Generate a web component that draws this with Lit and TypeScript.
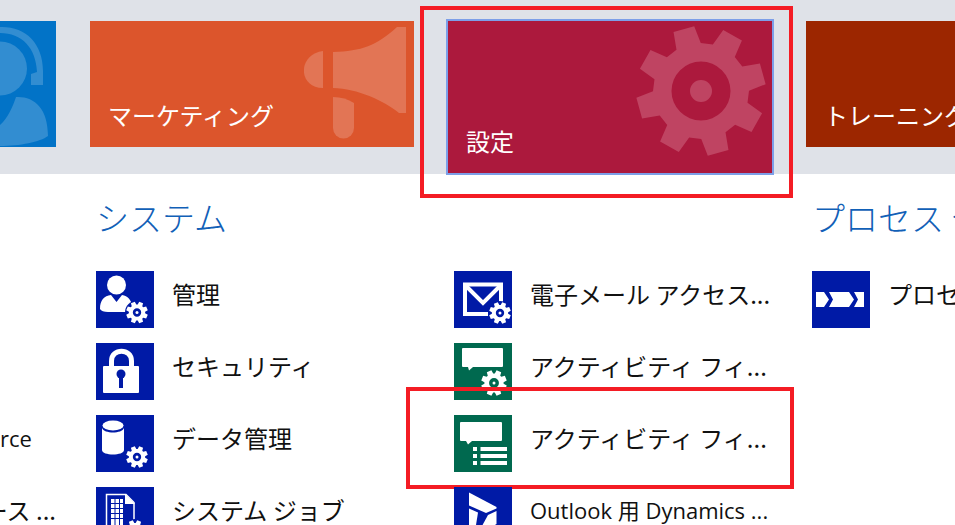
import { LitElement, html, svg, css } from "lit";
import { customElement } from "lit/decorators.js";
import { classMap } from "lit/directives/class-map.js";

/* Outline of a cog wheel with a round hole, to be filled with the even-odd rule. */
function cog(cx: number, cy: number, tip: number, root: number, hole: number, start = 0, half = 10, teeth = 8): string {
  const pt = (r: number, deg: number) => {
    const a = (deg * Math.PI) / 180;
    return `${(cx + r * Math.cos(a)).toFixed(2)} ${(cy + r * Math.sin(a)).toFixed(2)}`;
  };
  let d = "";
  for (let i = 0; i < teeth; i++) {
    const a = start + (i * 360) / teeth;
    d += `${i ? "L" : "M"}${pt(root, a - half * 1.6)}L${pt(tip, a - half)}L${pt(tip, a + half)}L${pt(root, a + half * 1.6)}`;
  }
  return `${d}ZM${cx - hole} ${cy}a${hole} ${hole} 0 1 0 ${hole * 2} 0a${hole} ${hole} 0 1 0 ${-hole * 2} 0Z`;
}

const smallCog = (cx: number, cy: number, r = 11) => svg`
  <circle class="back" cx=${cx} cy=${cy} r=${r + 1}></circle>
  <path fill-rule="evenodd" d=${cog(cx, cy, r, r * 0.74, r * 0.38, 22.5, 11)}></path>
  <circle cx=${cx} cy=${cy} r="1.5"></circle>`;

const glyphs: Record<string, unknown> = {
  admin: svg`
    <circle cx="20.500" cy="14" r="9.500"></circle>
    <path d="M4 38C4 29 8 25 15 24L20.500 31L26 24C32 25 35 29 36 34L32 41H12C8 41 5 40 4 38Z"></path>
    ${smallCog(41, 41.5)}`,
  lock: svg`
    <path class="line" stroke-width="5" d="M15.500 25V18C15.500 5 35.500 5 35.500 18V25"></path>
    <rect x="7" y="23" width="36" height="27" rx="1"></rect>
    <circle class="back" cx="25" cy="31" r="4.500"></circle>
    <path class="back" d="M23 32H27V45H23Z"></path>`,
  data: svg`
    <path d="M6 13C8 19 26 19 28 13V35C28 41 6 41 6 35Z"></path>
    <ellipse cx="17" cy="10.500" rx="10.500" ry="5"></ellipse>
    ${smallCog(41, 42)}`,
  jobs: svg`
    <path class="line" stroke-width="1.500" d="M10.500 57V7.500H30L38 15.500V57"></path>
    <path d="M29 7L39 17H29Z"></path>
    <path d="M15 12H27V50H15Z"></path>
    <path class="cut" d="M14 16.500H28M14 21.500H28M14 26.500H28M14 31.500H28M19 11V50M23.500 11V50"></path>
    ${smallCog(39, 44)}`,
  mail: svg`
    <path class="line" stroke-width="4" d="M34 43H11V13.500H47V32"></path>
    <path class="line" stroke-width="4" d="M11 14L29 32L47 14"></path>
    ${smallCog(46, 42)}`,
  feedCog: svg`
    <path d="M9 5H48Q49 5 49 6V23Q49 24 48 24H19L15 27.500L14 24H9Q8 24 8 23V6Q8 5 9 5Z"></path>
    ${smallCog(40, 40, 13)}`,
  feedList: svg`
    <path d="M7 7H47Q48 7 48 8V25Q48 26 47 26H18L14 29.500L12 26H7Q6 26 6 25V8Q6 7 7 7Z"></path>
    <path d="M19 32H23V36H19ZM26.500 32H53V36H26.500ZM19 39H23V43H19ZM26.500 39H53V43H26.500ZM19 46H23V50H19ZM26.500 46H53V50H26.500Z"></path>`,
  dynamics: svg`
    <path d="M15 5.500L42.500 20V21.500L32 26L15 18.500Z"></path>
    <path d="M15 21.500L24 25.500L19 57H15Z"></path>
    <path d="M42.500 24V37L22 50L34 28Z"></path>`,
  process: svg`
    <path d="M4 21H12L17 28.500L12 36H4ZM17 21H37L42 28.500L37 36H17L21 28.500ZM42 21H52V36H42L46 28.500Z"></path>`,
};

interface Entry { label: string; icon: string; tone?: string; marked?: boolean; latin?: boolean; }
interface Group { title: string; entries: Entry[]; }

const groups: Group[] = [
  {
    title: "システム",
    entries: [
      { label: "管理", icon: "admin" },
      { label: "セキュリティ", icon: "lock" },
      { label: "データ管理", icon: "data" },
      { label: "システム ジョブ", icon: "jobs" },
    ],
  },
  {
    title: "",
    entries: [
      { label: "電子メール アクセス...", icon: "mail" },
      { label: "アクティビティ フィ...", icon: "feedCog", tone: "green" },
      { label: "アクティビティ フィ...", icon: "feedList", tone: "green", marked: true },
      { label: "Outlook 用 Dynamics ...", icon: "dynamics", latin: true },
    ],
  },
  { title: "プロセス センター", entries: [{ label: "プロセス", icon: "process" }] },
];

@customElement("app-root")
export class AppRoot extends LitElement {
  static styles = css`
    :host {
      display: block;
      height: 100vh;
      overflow: hidden;
      background: #fff;
      color: #111;
      font: 24px/32px "Noto Sans CJK JP", sans-serif;
    }
    .columns {
      display: grid;
      grid-template-columns: 56px 324px 324px minmax(0, 1fr);
      column-gap: 34px;
    }
    .areas { height: 153px; padding-top: 21px; background: #dfe2e8; align-items: start; }
    .tile {
      position: relative;
      display: flex;
      justify-content: space-between;
      height: 126px;
      color: #fff;
      text-decoration: none;
      white-space: nowrap;
    }
    .tile .label { align-self: flex-end; padding: 0 0 16px 18px; }
    .art { flex: none; display: block; }
    .service { background: #0273c7; overflow: hidden; }
    .service .art { fill: #328dd1; }
    .marketing { background: #dc552c; }
    .marketing .art { fill: #e27555; }
    .training { background: #9c2600; overflow: hidden; }
    .settings {
      background: #ac193d;
      height: 152px;
      box-shadow: 0 0 0 2px #7d9fe8;
    }
    .settings .art { fill: #bf4462; margin: 5px 6px 0 0; }
    .mark {
      position: absolute;
      border: 4px solid #f41c24;
      pointer-events: none;
    }
    .settings .mark { inset: -15px -21px -25px -28px; }
    .entry .mark { inset: -28px -22px -17px -48px; }
    .menu { padding-top: 20px; }
    .group { padding-left: 6px; min-width: 0; }
    .title {
      height: 48px;
      margin: 0 0 29px;
      font-size: 33px;
      line-height: 46px;
      font-weight: 300;
      color: #1160b7;
      white-space: nowrap;
      overflow: hidden;
    }
    .list {
      display: grid;
      grid-template-columns: minmax(0, 1fr);
      row-gap: 15px;
      margin: 0;
      padding: 0;
      list-style: none;
    }
    .entry { position: relative; }
    .link {
      display: flex;
      gap: 18px;
      height: 57px;
      color: inherit;
      text-decoration: none;
      white-space: nowrap;
    }
    .link .label { padding-top: 7px; overflow: hidden; }
    .link .latin { font-family: "Open Sans", "Noto Sans CJK JP", sans-serif; font-size: 22px; }
    .icon { flex: none; width: 58px; height: 57px; background: #001aa6; fill: #fff; --back: #001aa6; }
    .icon.green { background: #00694f; --back: #00694f; }
    .icon .back { fill: var(--back); }
    .icon .line { fill: none; stroke: #fff; }
    .icon .cut { fill: none; stroke: var(--back); }
    .previous { display: grid; align-content: start; row-gap: 15px; padding-top: 221px; }
    .previous .link { overflow: hidden; }
    .previous .tail { justify-content: flex-end; }
    .previous .label { overflow: visible; }
  `;

  private entry(e: Entry) {
    return html`<li class="entry">
      <a class="link" href="#">
        <svg class=${classMap({ icon: true, green: e.tone === "green" })} viewBox="0 0 58 57" aria-hidden="true">${glyphs[e.icon]}</svg>
        <span class=${classMap({ label: true, latin: !!e.latin })}>${e.label}</span>
      </a>
      ${e.marked ? html`<span class="mark"></span>` : null}
    </li>`;
  }

  render() {
    return html`
      <nav class="areas columns">
        <a class="tile service" href="#" aria-label="サービス">
          <svg class="art" width="56" height="126" viewBox="0 21 56 126">
            <circle cx="0" cy="68.500" r="27"></circle>
            <path d="M0 27C25 26 43 43 43 71V85H31V74L37 72C36 48 22 33 0 33Z"></path>
            <path d="M16 97C34 96 48 108 48 136C40 142 20 146 0 146V125C8 118 13 106 16 97Z"></path>
          </svg>
        </a>
        <a class="tile marketing" href="#">
          <span class="label">マーケティング</span>
          <svg class="art" width="110" height="126" viewBox="304 21 110 126" aria-hidden="true">
            <path d="M323 51V88C297 87 298 54 323 51Z"></path>
            <path d="M333 52C362 51 376 46 397 27H406V113H399C383 100 358 89 333 88Z"></path>
            <path d="M333 97C341 97 348 99 354 103V128A10.500 10.500 0 0 1 333 128Z"></path>
          </svg>
        </a>
        <a class="tile settings" href="#">
          <span class="label">設定</span>
          <svg class="art" width="130" height="131" viewBox="636 26 130 131" aria-hidden="true">
            <path fill-rule="evenodd" d=${cog(701, 91, 65, 48, 29.5, -15.5, 9.5)}></path>
            <circle cx="701" cy="91" r="11"></circle>
          </svg>
          <span class="mark"></span>
        </a>
        <a class="tile training" href="#"><span class="label">トレーニング</span></a>
      </nav>
      <main class="menu columns">
        <div class="previous">
          <a class="link" href="#"><span class="label latin">rce</span></a>
          <a class="link tail" href="#"><span class="label">ース ...</span></a>
        </div>
        ${groups.map(
          (g) => html`<section class="group">
            <h2 class="title">${g.title}</h2>
            <ul class="list">${g.entries.map((e) => this.entry(e))}</ul>
          </section>`
        )}
      </main>
    `;
  }
}
